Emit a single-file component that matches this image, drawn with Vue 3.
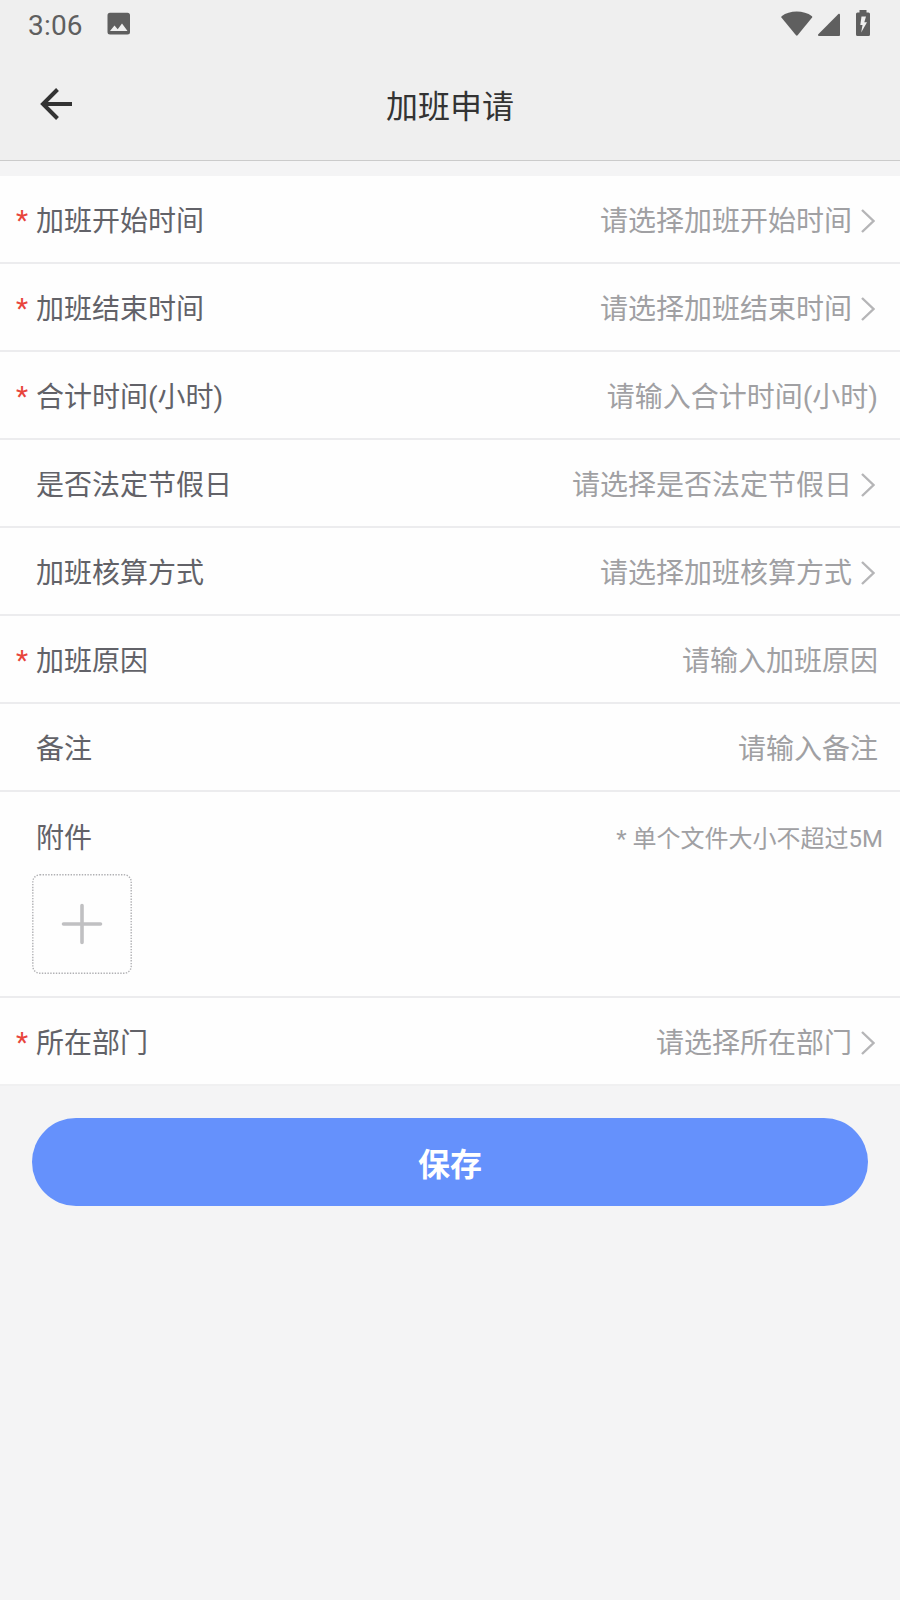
<template>
    <div class="page">
        <header class="header">
            <div class="status-bar">
                <div class="status-left">
                    <span class="time">3:06</span>
                    <svg class="icon-image" width="24" height="24" viewBox="0 0 24 24">
                        <path fill="#5f5f5f" fill-rule="evenodd" d="M3 .7h17.500a2.500 2.500 0 0 1 2.500 2.500v16.800a2.500 2.500 0 0 1-2.500 2.500H3a2.500 2.500 0 0 1-2.500-2.500V3.200A2.500 2.500 0 0 1 3 .7zM3 19h17.500L15 11.600l-4.300 5.600-3.200-3.600z" />
                    </svg>
                </div>
                <div class="status-right">
                    <svg class="icon-wifi" width="32" height="26" viewBox="0 0 32 26">
                        <path fill="#5f5f5f" d="M.6 6.200C4.800 3 10 1.500 15.700 1.500S26.800 3 31 6.200c.4.400.4 1 .1 1.400L16.600 25.300c-.5.500-1.100.5-1.600 0L.4 7.600c-.3-.5-.2-1 .2-1.400z" />
                    </svg>
                    <svg class="icon-signal" width="22" height="26" viewBox="0 0 22 26">
                        <path fill="#5f5f5f" d="M22 4.600V25a1 1 0 0 1-1 1H1C0 26-.3 25 .3 24.300L20.400 4.100c.8-.7 1.600-.3 1.600.5z" />
                    </svg>
                    <svg class="icon-battery" width="14" height="26" viewBox="0 0 14 26">
                        <path fill="#5f5f5f" fill-rule="evenodd" d="M3.500 0h7v2.500H12.500A1.500 1.500 0 0 1 14 4v20.500a1.500 1.500 0 0 1-1.500 1.500h-11A1.500 1.500 0 0 1 0 24.500V4a1.500 1.500 0 0 1 1.500-1.500h2zM5.500 6.500L4.300 15h2.200L5.200 22.500 11 12.200H8.300L10 6.500z" />
                    </svg>
                </div>
            </div>
            <div class="nav-bar">
                <svg class="back" width="34" height="32" viewBox="0 0 34 32" @click="goBack">
                    <path d="M17.500 1.500L3 16l14.500 14.500M3 16H32" fill="none" stroke="#333" stroke-width="4" />
                </svg>
                <h1 class="title">加班申请</h1>
            </div>
        </header>

        <main class="form">
            <div v-for="item in fields" :key="item.label" class="cell" :class="{ 'cell-upload': item.type === 'upload' }">
                <div class="cell-row">
                    <span class="required">{{ item.required ? '*' : '' }}</span>
                    <span class="label">{{ item.label }}</span>
                    <span v-if="item.type === 'upload'" class="tip">* 单个文件大小不超过5M</span>
                    <span v-else class="placeholder">{{ prefix[item.type] + item.label }}</span>
                    <svg v-if="item.type === 'select'" class="chevron" width="14" height="24" viewBox="0 0 14 24">
                        <path d="M1 1l11.500 11L1 23" fill="none" stroke="#b5b5b7" stroke-width="2.400" />
                    </svg>
                </div>
                <svg v-if="item.type === 'upload'" class="upload" width="100" height="100" viewBox="0 0 100 100">
                    <rect x=".8" y=".8" width="98.400" height="98.400" rx="7" fill="none" stroke="#b0b0b3" stroke-width="1.400" stroke-dasharray="1.400 1.400" />
                    <path d="M50 31.500v37M31.500 50h37" stroke="#c0c0c2" stroke-width="3.600" stroke-linecap="round" />
                </svg>
            </div>
        </main>

        <button class="save">保存</button>
    </div>
</template>

<script setup>
const prefix = {
    select: '请选择',
    input: '请输入',
};

const fields = [
    { label: '加班开始时间', type: 'select', required: true },
    { label: '加班结束时间', type: 'select', required: true },
    { label: '合计时间(小时)', type: 'input', required: true },
    { label: '是否法定节假日', type: 'select' },
    { label: '加班核算方式', type: 'select' },
    { label: '加班原因', type: 'input', required: true },
    { label: '备注', type: 'input' },
    { label: '附件', type: 'upload' },
    { label: '所在部门', type: 'select', required: true },
];

function goBack() {
    window.history.back();
}
</script>

<style>
body {
    background: #f4f4f5;
}
</style>

<style scoped>
.page {
    box-sizing: border-box;
    min-height: 1600px;
    background: #f4f4f5;
    font-family: Roboto, "Noto Sans CJK SC", sans-serif;
    font-size: 28px;
    color: #626268;
}

.header {
    box-sizing: border-box;
    height: 161px;
    background: #efefef;
    border-bottom: 1px solid #cbcbcb;
}

.status-bar {
    display: flex;
    justify-content: space-between;
    height: 48px;
    padding: 0 30px 0 28px;
}

.status-left,
.status-right {
    display: flex;
    align-items: flex-start;
}

.time {
    line-height: 52px;
    letter-spacing: 0.2px;
    color: #5f5f5f;
}

.icon-image {
    margin: 12px 0 0 24px;
}

.icon-wifi {
    margin-top: 10px;
}

.icon-signal {
    margin: 10px 16px 0 5px;
}

.icon-battery {
    margin-top: 10px;
}

.nav-bar {
    display: grid;
    grid-template-columns: 72px 1fr 72px;
    align-items: center;
    height: 112px;
}

.back {
    margin-left: 40px;
}

.title {
    margin: 6px 0 0;
    font-size: 32px;
    font-weight: 400;
    line-height: 48px;
    text-align: center;
    color: #333;
}

.form {
    margin-top: 15px;
}

.cell {
    box-sizing: border-box;
    height: 88px;
    background: #fefefe;
    border-bottom: 2px solid #ececee;
}

.cell:last-child {
    border-bottom-color: #f0f0f1;
}

.cell-upload {
    height: 206px;
}

.cell-row {
    display: flex;
    align-items: center;
    height: 86px;
    padding: 0 22px 0 16px;
    line-height: 42px;
}

.required {
    width: 20px;
    padding-top: 4px;
    color: #e8453c;
}

.label,
.placeholder {
    padding-top: 6px;
}

.cell-upload .label {
    padding-top: 8px;
}

.placeholder {
    margin-left: auto;
    color: #a0a0a3;
}

.chevron {
    margin: 3px 3px 0 9px;
}

.tip {
    margin: 8px -5px 0 auto;
    font-size: 24px;
    color: #a0a0a3;
}

.upload {
    display: block;
    margin: -4px 0 0 32px;
}

.save {
    display: block;
    width: 836px;
    height: 88px;
    margin: 32px auto 0;
    padding: 0;
    border: none;
    border-radius: 44px;
    background: #6591fc;
    color: #fff;
    font-family: inherit;
    font-size: 32px;
    font-weight: 700;
}
</style>
